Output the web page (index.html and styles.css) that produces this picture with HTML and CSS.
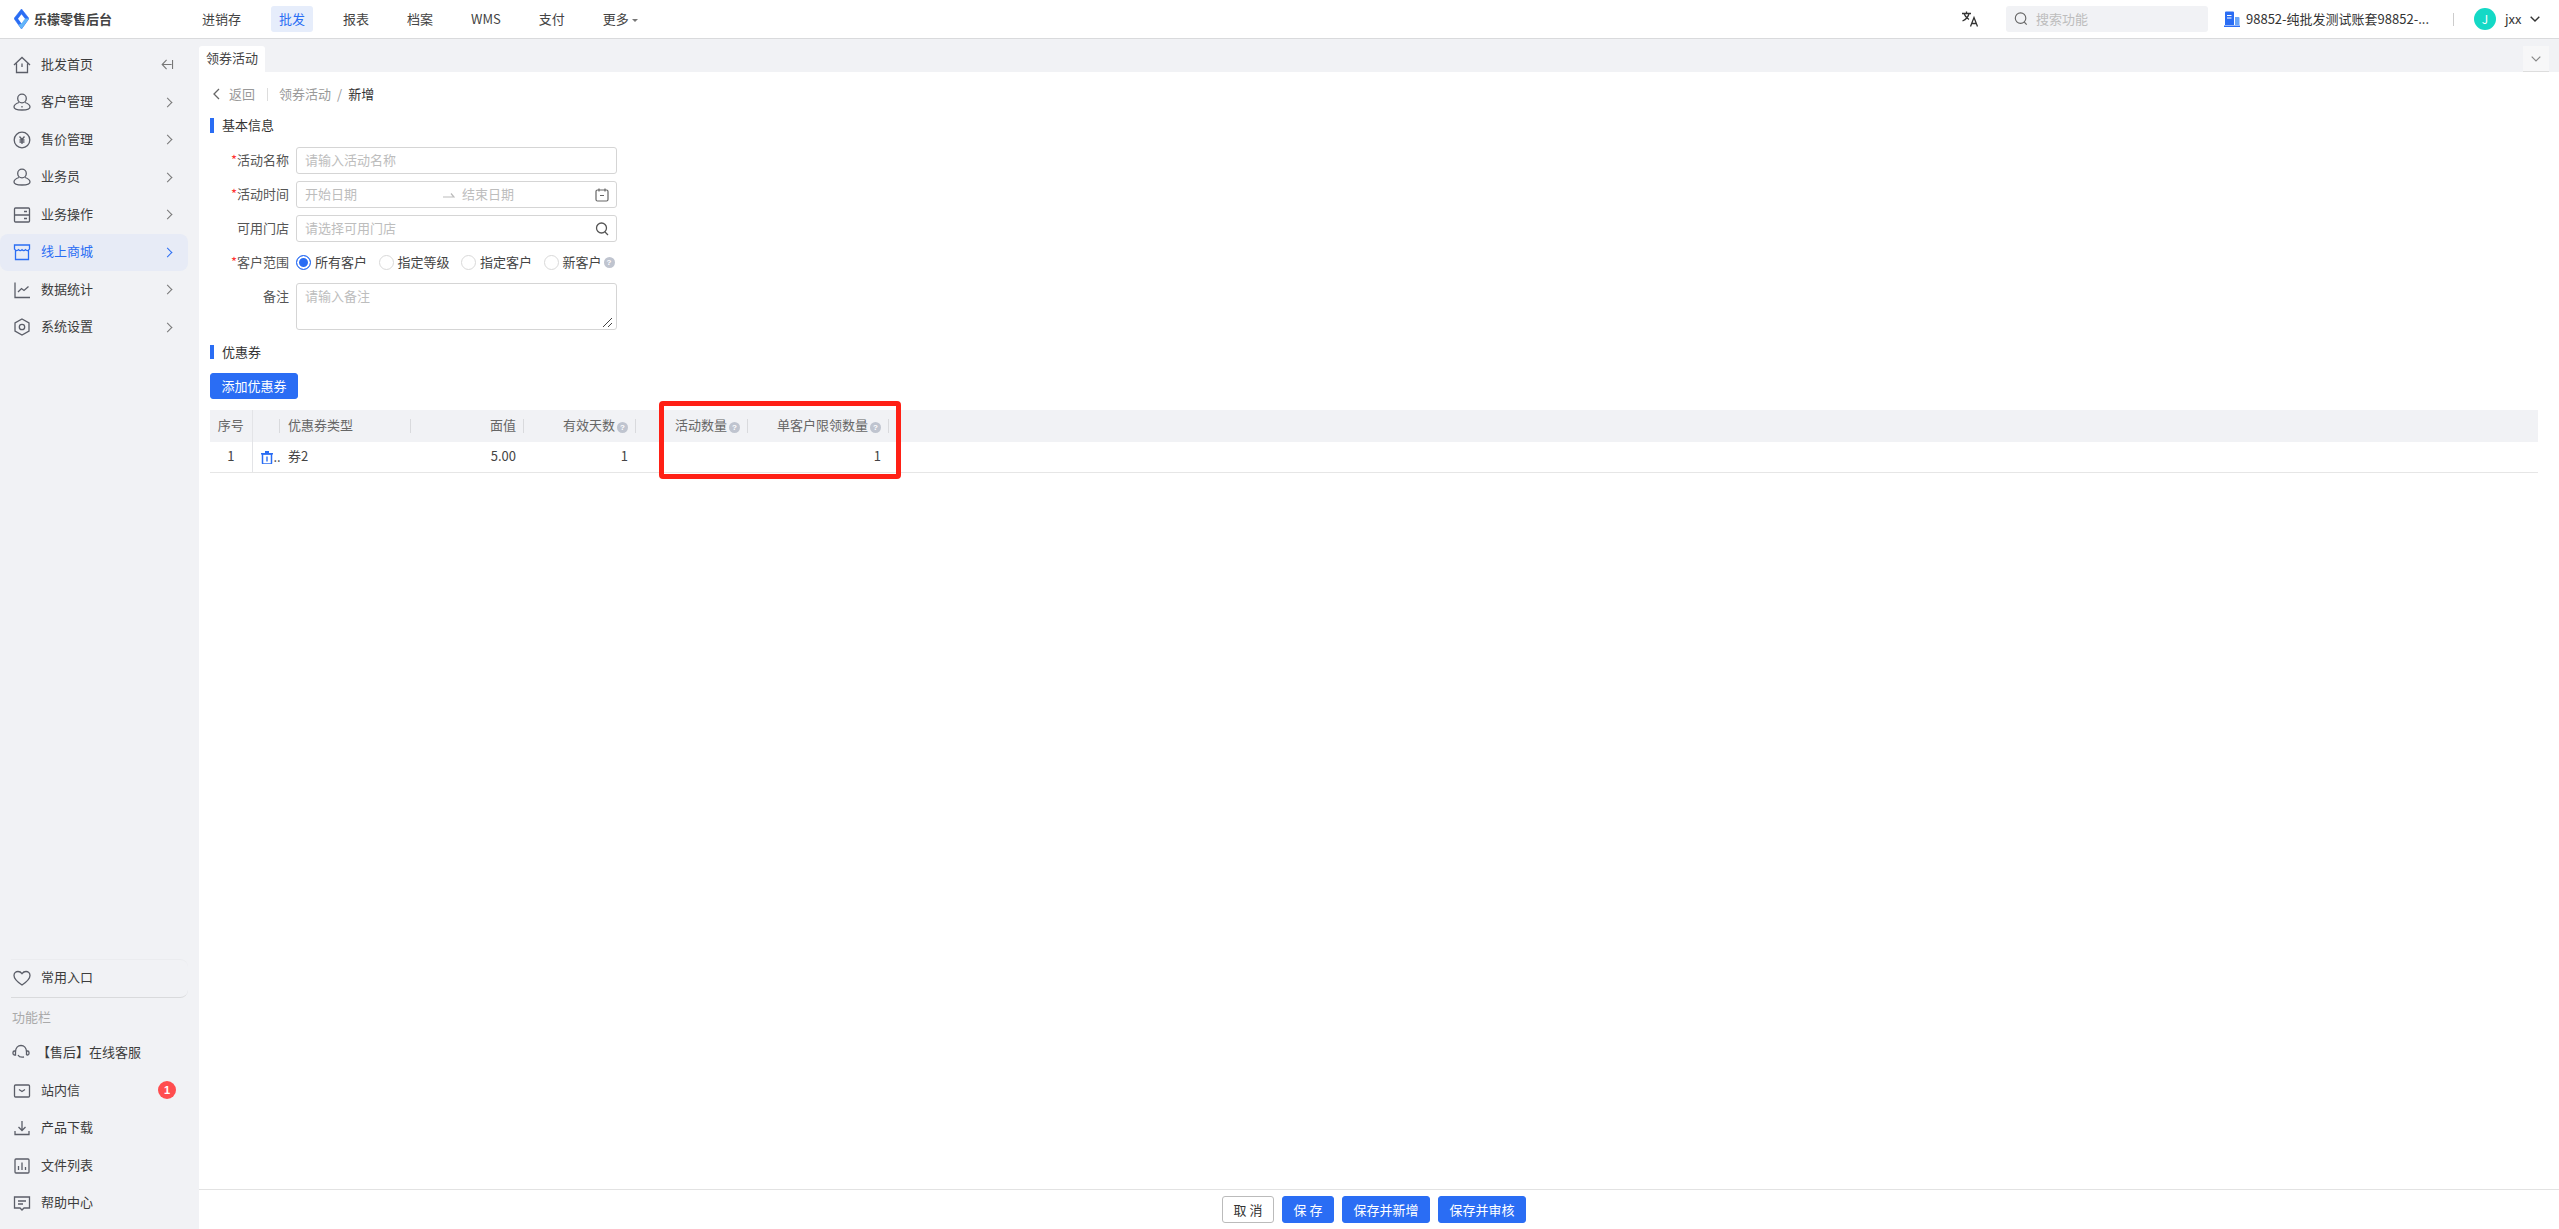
FILE: index.html
```html
<!DOCTYPE html>
<html lang="zh-CN">
<head>
<meta charset="utf-8">
<title>领券活动</title>
<link rel="stylesheet" href="styles.css">
</head>
<body>
<header class="topbar">
  <div class="brand">
    <svg class="logo" viewBox="0 0 15 20"><path d="M7.500 0L15 9.500 7.500 20 0 9.500z" fill="#2a6df4" stroke="#2a6df4" stroke-width=".6" stroke-linejoin="round"/><path d="M15 9.500L7.500 20 4.500 15.800l3-1.300 3.500-5z" fill="#62b5f8"/><path d="M7.500 5.200L11 9.800 7.500 14.500 4 9.800z" fill="#fff"/></svg>
    <span class="brand-name">乐檬零售后台</span>
  </div>
  <nav class="topnav">
    <a>进销存</a><a class="on">批发</a><a>报表</a><a>档案</a><a>WMS</a><a>支付</a><a class="more">更多<i class="caret"></i></a>
  </nav>
  <div class="top-right">
    <svg class="translate" viewBox="0 0 18 18" fill="none" stroke="#333" stroke-width="1.3"><path d="M1 3.500h9M5.500 1.500v2M8 3.500c-.6 3-3 6-6.500 7.500M3 3.500c.8 2.600 2.600 4.600 5 6"/><path d="M9.500 16.500l3.500-9 3.500 9M10.800 13.500h4.400"/></svg>
    <div class="search">
      <svg class="i14" viewBox="0 0 16 16" fill="none" stroke="#666" stroke-width="1.300"><circle cx="7.500" cy="7" r="6"/><path d="M11.800 11.500l2.700 3"/></svg>
      <span>搜索功能</span>
    </div>
    <svg class="org" viewBox="0 0 16 16"><path d="M1 1.500a1 1 0 0 1 1-1h7a1 1 0 0 1 1 1V14H1z" fill="#2a6df4"/><path d="M11 6h3.500a1 1 0 0 1 1 1v7H11z" fill="#6aa5f8"/><path d="M3 4.500h4.500M3 7h4.500" stroke="#fff" stroke-width="1"/><path d="M0 14.500h16V16H0z" fill="#2a6df4"/></svg>
    <span class="org-name">98852-纯批发测试账套98852-...</span>
    <i class="vline"></i>
    <span class="avatar">J</span>
    <span class="uname">jxx</span>
    <svg class="userchev" viewBox="0 0 10 6" fill="none" stroke="#333" stroke-width="1.400"><path d="M.7.700L5 5l4.300-4.300"/></svg>
  </div>
</header>

<div class="body">
  <aside class="sidebar">
    <ul class="menu">
      <li class="row"><svg class="ico" viewBox="0 0 18 18"><path d="M1 9l8-7.500L17 9M3.500 7.500V16.500h11V7.500M9 7.500v3.500"/></svg><span>批发首页</span>
        <svg class="collapse" viewBox="0 0 14 12"><path d="M6 1L1.200 6 6 11M1.500 6h10M12.500 1v10"/></svg></li>
      <li class="row"><svg class="ico" viewBox="0 0 18 18"><circle cx="9" cy="5.500" r="4.300"/><path d="M6 9.500C3 10.500 1 12 1 14c0 2 3 3 8 3s8-1 8-3c0-2-2-3.500-5-4.500M9 13v1.500"/></svg><span>客户管理</span><i class="chev"></i></li>
      <li class="row"><svg class="ico" viewBox="0 0 18 18"><circle cx="9" cy="9" r="7.800"/><path d="M6.500 5.500L9 8.500l2.500-3M6.500 9h5M6.500 11h5M9 8.500V13"/></svg><span>售价管理</span><i class="chev"></i></li>
      <li class="row"><svg class="ico" viewBox="0 0 18 18"><circle cx="9" cy="5.500" r="4.300"/><path d="M6 9.500C3 10.500 1 12 1 14c0 2 3 3 8 3s8-1 8-3c0-2-2-3.500-5-4.500"/></svg><span>业务员</span><i class="chev"></i></li>
      <li class="row"><svg class="ico" viewBox="0 0 18 18"><rect x="1.500" y="2" width="15" height="14" rx="1"/><path d="M1.500 9h15M11 5.500h3M11 12.500h3"/></svg><span>业务操作</span><i class="chev"></i></li>
      <li class="row active"><svg class="ico" viewBox="0 0 18 18"><path d="M1.500 6.500V2h15v4.500M2.500 7v9.500h13V7M1.500 6c1 2 3 2 4 .7 1 1.300 2.500 1.300 3.500 0 1 1.300 2.500 1.300 3.500 0 1 1.300 3 1.300 4-.7"/></svg><span>线上商城</span><i class="chev"></i></li>
      <li class="row"><svg class="ico" viewBox="0 0 18 18"><path d="M2 1.500V16.500h15M5 11l3.500-3.500 2.500 2 4.500-4"/></svg><span>数据统计</span><i class="chev"></i></li>
      <li class="row"><svg class="ico" viewBox="0 0 18 18"><path d="M9 1l7 4v8l-7 4-7-4V5z"/><circle cx="9" cy="9" r="2.700"/></svg><span>系统设置</span><i class="chev"></i></li>
    </ul>
    <div class="side-bottom">
      <div class="row fav"><svg class="ico" viewBox="0 0 18 18"><path d="M9 16C3 12 1 9.500 1 6.500 1 4 3 2.500 5 2.500c1.700 0 3 .8 4 2.200 1-1.400 2.300-2.200 4-2.200 2 0 4 1.500 4 4 0 3-2 5.500-8 9.500z"/></svg><span>常用入口</span></div>
      <div class="func-title">功能栏</div>
      <div class="row service"><svg class="ico" viewBox="0 0 18 18"><path d="M3.500 8C3.500 4 6 1.500 9 1.500S14.500 4 14.500 8v3M3.500 7H2.500a1.500 1.500 0 0 0-1.500 1.500v1A1.500 1.500 0 0 0 2.500 11h1zM14.500 7h1a1.500 1.500 0 0 1 1.500 1.500v1a1.500 1.500 0 0 1-1.500 1.500h-1M6 11c1 2 3.500 2.500 6 2"/></svg><span>【售后】在线客服</span></div>
      <div class="row"><svg class="ico" viewBox="0 0 18 18"><rect x="1.500" y="3" width="15" height="12" rx="1"/><path d="M6 7.500l3 2 3-2"/></svg><span>站内信</span><b class="badge">1</b></div>
      <div class="row"><svg class="ico" viewBox="0 0 18 18"><path d="M9 2v9.500M5.500 8L9 11.500 12.500 8M2 12v3.500h14V12"/></svg><span>产品下载</span></div>
      <div class="row"><svg class="ico" viewBox="0 0 18 18"><rect x="2" y="2" width="14" height="14" rx="1"/><path d="M5.500 13V9M9 13V5.500M12.500 13v-3"/></svg><span>文件列表</span></div>
      <div class="row"><svg class="ico" viewBox="0 0 18 18"><path d="M1.500 3h15v11h-5.500L9 16l-2-2H1.500zM5 7h8M5 10h5"/></svg><span>帮助中心</span></div>
    </div>
  </aside>

  <main class="main">
    <div class="tabbar">
      <div class="tab">领券活动</div>
      <div class="tab-more"><svg viewBox="0 0 10 6" fill="none" stroke="#888" stroke-width="1.200"><path d="M.7.700L5 5l4.300-4.300"/></svg></div>
    </div>
    <div class="content">
      <div class="crumbs">
        <svg class="back" viewBox="0 0 7 12" fill="none" stroke="#666" stroke-width="1.300"><path d="M6 1L1 6l5 5"/></svg>
        <span class="muted back-txt">返回</span>
        <i class="cut"></i>
        <span class="muted">领券活动</span>
        <span class="muted slash">/</span>
        <span class="cur">新增</span>
      </div>

      <h2 class="sec first">基本信息</h2>
      <div class="form">
        <div class="frow"><label class="req">活动名称</label><div class="field ph">请输入活动名称</div></div>
        <div class="frow"><label class="req">活动时间</label>
          <div class="field ph date"><span class="d1">开始日期</span>
            <svg class="arrow" viewBox="0 0 12 6" fill="none" stroke="#bbb" stroke-width="1.200"><path d="M0 5h11L8 1.500"/></svg>
            <span class="d2">结束日期</span>
            <svg class="fico" viewBox="0 0 14 14" fill="none" stroke="#666" stroke-width="1.200"><rect x="1" y="2" width="12" height="11" rx="1.500"/><path d="M4 .5v3M10 .5v3M5 7.500h4"/></svg>
          </div>
        </div>
        <div class="frow"><label>可用门店</label>
          <div class="field ph store"><span>请选择可用门店</span>
            <svg class="fico" viewBox="0 0 14 14" fill="none" stroke="#555" stroke-width="1.300"><circle cx="6.500" cy="6" r="5"/><path d="M10 10l3 3"/></svg>
          </div>
        </div>
        <div class="frow"><label class="req">客户范围</label>
          <div class="radios">
            <span class="radio on"><i></i><span>所有客户</span></span>
            <span class="radio"><i></i><span>指定等级</span></span>
            <span class="radio"><i></i><span>指定客户</span></span>
            <span class="radio"><i></i><span>新客户</span></span><em class="q">?</em>
          </div>
        </div>
        <div class="frow"><label>备注</label>
          <div class="field ph area">请输入备注
            <svg class="grip" viewBox="0 0 10 10" fill="none" stroke="#444" stroke-width="1"><path d="M0 10L9 1M5 10l4-4"/></svg>
          </div>
        </div>
      </div>

      <h2 class="sec second">优惠券</h2>
      <button class="btn primary add">添加优惠券</button>

      <table class="grid">
        <colgroup><col class="c1"><col class="c2"><col class="c3"><col class="c4"><col class="c5"><col class="c6"><col class="c7"><col></colgroup>
        <thead>
          <tr>
            <th class="ctr line">序号</th>
            <th class="sep"></th>
            <th class="sep">优惠券类型</th>
            <th class="r sep">面值</th>
            <th class="r sep">有效天数<em class="q">?</em></th>
            <th class="r sep">活动数量<em class="q">?</em></th>
            <th class="r sep">单客户限领数量<em class="q">?</em></th>
            <th></th>
          </tr>
        </thead>
        <tbody>
          <tr>
            <td class="ctr line">1</td>
            <td class="ops"><svg viewBox="0 0 12 13"><path d="M1.500 3h9v9a1 1 0 0 1-1 1h-7a1 1 0 0 1-1-1z" fill="none" stroke="#2a6df4" stroke-width="1.500"/><path d="M0 2h12v1.500H0zM4 0h4v2H4zM5.300 5.500h1.400v5H5.300z" fill="#2a6df4"/></svg><span>..</span></td>
            <td>券2</td>
            <td class="r">5.00</td>
            <td class="r">1</td>
            <td class="r"></td>
            <td class="r">1</td>
            <td></td>
          </tr>
        </tbody>
      </table>
      <div class="redbox"></div>
    </div>
    <footer class="footer">
      <button class="btn plain">取 消</button>
      <button class="btn primary wide">保 存</button>
      <button class="btn primary">保存并新增</button>
      <button class="btn primary">保存并审核</button>
    </footer>
  </main>
</div>
</body>
</html>
```
FILE: styles.css
```css
* { box-sizing: border-box; }
html, body { height: 100%; }
body {
  margin: 0;
  height: 1229px;
  display: flex;
  flex-direction: column;
  overflow: hidden;
  font: 13px/20px "Noto Sans CJK SC", "Noto Sans", sans-serif;
  color: #333;
  background: #fff;
}
ul { list-style: none; margin: 0; padding: 0; }
i, em, b { font-style: normal; }

/* top bar */
.topbar {
  height: 39px;
  flex: none;
  display: flex;
  align-items: center;
  border-bottom: 1px solid #d9dadc;
  padding-left: 14px;
  padding-right: 19px;
}
.brand { width: 180px; display: flex; align-items: center; gap: 5px; }
.logo { width: 15px; height: 20px; }
.brand-name { font-weight: 700; font-size: 13px; color: #444; }
.topnav { display: flex; gap: 22px; }
.topnav a { height: 26px; line-height: 26px; padding: 0 8px; border-radius: 3px; color: #444; }
.topnav a.on { background: #e6edfb; color: #2a6df4; }
.topnav .more { padding-right: 0; }
.caret {
  display: inline-block;
  margin-left: 3px;
  vertical-align: 2px;
  border: 3px solid transparent;
  border-top: 3px solid #777;
  border-bottom: 0;
}
.top-right { margin-left: auto; display: flex; align-items: center; }
.translate { width: 18px; height: 18px; }
.search {
  width: 202px;
  height: 26px;
  margin-left: 27px;
  padding-left: 8px;
  display: flex;
  align-items: center;
  gap: 8px;
  background: #f1f2f5;
  border-radius: 3px;
  color: #bdbdbd;
}
.i14 { width: 14px; height: 14px; }
.org { width: 16px; height: 16px; margin-left: 16px; }
.org-name { margin-left: 6px; width: 184px; white-space: nowrap; overflow: hidden; color: #333; }
.vline { width: 1px; height: 13px; background: #ccc; margin-left: 23px; }
.avatar {
  width: 22px;
  height: 22px;
  margin-left: 20px;
  border-radius: 50%;
  background: #14d9c6;
  color: #fff;
  text-align: center;
  line-height: 22px;
  font-size: 12px;
}
.uname { margin-left: 9px; width: 25px; }
.userchev { width: 10px; height: 6px; }

/* shell */
.body { flex: 1; display: flex; min-height: 0; }
.sidebar {
  width: 199px;
  flex: none;
  background: #f1f2f5;
  display: flex;
  flex-direction: column;
  justify-content: space-between;
  padding: 7px 0;
}
.row {
  position: relative;
  width: 188px;
  height: 37.5px;
  padding-left: 13px;
  display: flex;
  align-items: center;
  gap: 10px;
  color: #3c3c3c;
  border-radius: 0 8px 8px 0;
}
.row > span { padding-bottom: 2px; }
.ico { width: 18px; height: 18px; flex: none; fill: none; stroke: #5b5e68; stroke-width: 1.300; }
.row.active { background: #e7ebf6; color: #2a6df4; border-radius: 8px; }
.row.active .ico { stroke: #2a6df4; }
.row.active .chev { border-color: #2a6df4; }
.chev {
  width: 7px;
  height: 7px;
  margin-left: auto;
  margin-right: 17px;
  border-top: 1.300px solid #777;
  border-right: 1.300px solid #777;
  transform: rotate(45deg);
}
.collapse { width: 13px; height: 11px; margin-left: auto; margin-right: 14px; fill: none; stroke: #777; stroke-width: 1.200; }
.side-bottom { display: flex; flex-direction: column; }
.fav { border-top: 1px solid #ebecef; border-bottom: 1px solid #d9dadc; margin-left: 11px; padding-left: 2px; width: 177px; height: 39px; }
.func-title { height: 37px; margin-left: 12px; line-height: 37px; color: #aaa; }
.service { gap: 7px; padding-left: 12px; }
.badge {
  position: absolute;
  left: 158px;
  top: 9px;
  width: 18px;
  height: 18px;
  border-radius: 50%;
  background: #ff4d4f;
  color: #fff;
  font: 700 11px/18px "Liberation Sans", sans-serif;
  text-align: center;
}

/* main */
.main { flex: 1; min-width: 0; display: flex; flex-direction: column; }
.tabbar {
  height: 33px;
  flex: none;
  padding-top: 7px;
  padding-right: 10px;
  background: #f1f2f5;
  display: flex;
  justify-content: space-between;
}
.tab {
  width: 66px;
  height: 26px;
  line-height: 24px;
  padding-left: 7px;
  background: #fff;
  border-radius: 3px 3px 0 0;
  color: #444;
}
.tab-more {
  width: 26px;
  height: 26px;
  background: #f7f7f8;
  border-bottom: 1px solid #ddd;
  display: flex;
  align-items: center;
  justify-content: center;
}
.tab-more svg { width: 10px; height: 6px; }
.content { flex: 1; position: relative; padding: 12px 21px 0 11px; }

.crumbs { height: 20px; display: flex; align-items: center; }
.back { width: 7px; height: 12px; margin-left: 3px; }
.muted { color: #999; }
.back-txt { margin-left: 9px; }
.cut { width: 1px; height: 13px; background: #ddd; margin: 0 11px 0 12px; }
.slash { margin: 0 6px; }
.cur { color: #333; }

.sec {
  margin: 0;
  font-size: 13px;
  font-weight: 400;
  line-height: 13px;
  height: 15px;
  padding-left: 8px;
  border-left: 4px solid #2a6df4;
  color: #333;
}
.sec.first { margin-top: 14px; }
.sec.second { margin-top: 15px; height: 14px; }

.form { margin-top: 14px; width: 407px; display: flex; flex-direction: column; gap: 7px; }
.frow { display: flex; gap: 7px; }
.frow label { width: 79px; flex: none; text-align: right; line-height: 25px; color: #555; }
.req::before { content: "*"; color: #f33; }
.field {
  position: relative;
  flex: 1;
  height: 27px;
  padding: 0 8px;
  line-height: 23px;
  border: 1px solid #d5d5d5;
  border-radius: 3px;
}
.ph { color: #bdbdbd; }
.date, .store { display: flex; align-items: center; }
.date > span, .store > span { padding-bottom: 2px; }
.d1 { width: 138px; }
.arrow { width: 12px; height: 6px; }
.d2 { margin-left: 7px; }
.fico { width: 14px; height: 14px; margin-left: auto; margin-right: -1px; }
.radios { flex: 1; height: 27px; display: flex; align-items: center; }
.radio { display: flex; align-items: center; gap: 4px; margin-right: 11.500px; color: #444; }
.radio span { padding-bottom: 2px; }
.radio:nth-last-child(2) { margin-right: 2px; }
.radio i { width: 15px; height: 15px; border-radius: 50%; border: 1px solid #d9d9d9; background: #fff; }
.radio.on i { border: 1px solid #2a6df4; box-shadow: inset 0 0 0 2px #fff; background: #2a6df4; }
.q {
  display: inline-block;
  width: 11px;
  height: 11px;
  border-radius: 50%;
  background: #bfc4cf;
  color: #fff;
  font: 700 8px/11px "Liberation Sans", sans-serif;
  text-align: center;
  flex: none;
}
.area { height: 47px; }
.grip { position: absolute; right: 3px; bottom: 2px; width: 10px; height: 10px; }

.btn {
  height: 26px;
  padding: 0 10px;
  font: inherit;
  line-height: 24px;
  border-radius: 3px;
  border: 1px solid #bbb;
  background: #fff;
  color: #333;
}
.btn.primary { background: #2a6df4; border-color: #2a6df4; color: #fff; }
.add { display: block; width: 88px; margin-top: 14px; padding: 0; }

.grid { margin-top: 11px; width: 100%; table-layout: fixed; border-collapse: collapse; }
.c1 { width: 42px; } .c2 { width: 28px; } .c3 { width: 131px; } .c4 { width: 113px; }
.c5 { width: 112px; } .c6 { width: 112px; } .c7 { width: 141px; }
.grid th {
  position: relative;
  height: 32px;
  padding: 0 8px 2px;
  font-weight: 400;
  text-align: left;
  color: #666;
  background: #f1f2f5;
  white-space: nowrap;
}
.grid th.ctr { padding: 0 0 2px; text-align: center; }
.grid th.r { text-align: right; }
.grid td { height: 30px; padding: 0 8px 2px; border-bottom: 1px solid #e6e6e6; color: #444; }
.grid td.r { text-align: right; }
.grid td.ctr { text-align: center; padding: 0 0 2px; }
.grid .line { border-right: 1px solid #e3e4e7; }
.grid th.sep::after {
  content: "";
  position: absolute;
  right: 0;
  top: 9px;
  height: 14px;
  width: 1px;
  background: #d9dadd;
}
.grid th .q { margin-left: 2px; vertical-align: 0; }
.grid td.ops { padding: 0 0 0 8px; white-space: nowrap; overflow: hidden; }
.ops svg { width: 12px; height: 13px; vertical-align: -2px; }
.ops span { margin-left: 1px; }

.redbox {
  position: absolute;
  left: 460px;
  top: 329px;
  width: 242px;
  height: 78px;
  border: 5px solid #ff2015;
  border-radius: 4px;
  pointer-events: none;
}

.footer {
  height: 40px;
  flex: none;
  border-top: 1px solid #e2e2e2;
  display: flex;
  justify-content: center;
  align-items: flex-start;
  gap: 8px;
  padding-top: 6px;
  padding-right: 10px;
}
.footer .btn { height: 27px; padding: 0; width: 88px; }
.footer .plain, .footer .wide { width: 52px; }
```
